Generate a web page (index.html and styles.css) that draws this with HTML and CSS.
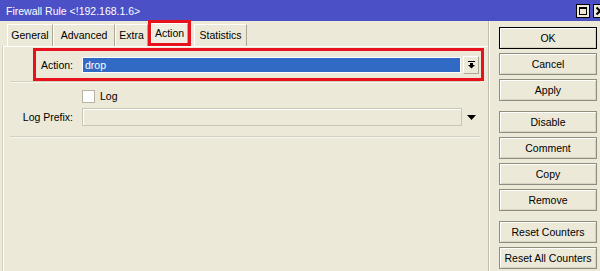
FILE: index.html
```html
<!DOCTYPE html>
<html>
<head>
<meta charset="utf-8">
<title>Firewall Rule</title>
<link rel="stylesheet" href="styles.css">
</head>
<body>
<div class="window">
  <div class="titlebar">
    <span class="title">Firewall Rule &lt;!192.168.1.6&gt;</span>
    <div class="controls">
      <span class="ctl">
        <svg width="14" height="14" viewBox="0 0 14 14"><rect x="0.5" y="0.5" width="13" height="13" fill="#ece9d8" stroke="#000"/><rect x="3.5" y="3.5" width="7" height="7" fill="none" stroke="#000"/><rect x="3" y="3" width="8" height="2" fill="#000"/></svg>
      </span>
      <span class="ctl">
        <svg width="14" height="14" viewBox="0 0 14 14"><rect x="0.5" y="0.5" width="13" height="13" fill="#ece9d8" stroke="#000"/><path d="M3.5 3.5 L10.5 10.5 M10.5 3.5 L3.5 10.5" stroke="#000" stroke-width="2"/></svg>
      </span>
    </div>
  </div>
  <div class="main">
    <div class="left">
      <div class="tabs">
        <div class="tab w-general">General</div>
        <div class="tab w-advanced">Advanced</div>
        <div class="tab w-extra">Extra</div>
        <div class="tab-mark"><div class="tab active">Action</div></div>
        <div class="tab w-stats">Statistics</div>
      </div>
      <div class="panel">
        <div class="action-mark">
          <span class="lbl">Action:</span>
          <div class="select">drop</div>
          <div class="dd-btn">
            <svg width="7" height="8" viewBox="0 0 7 8"><rect x="0" y="0" width="7" height="1" fill="#000"/><rect x="2" y="2" width="3" height="2" fill="#000"/><path d="M0 4 H7 L3.5 7.5 Z" fill="#000"/></svg>
          </div>
        </div>
        <div class="sep"></div>
        <div class="row log-row">
          <span class="check"></span>
          <span class="check-text">Log</span>
        </div>
        <div class="row prefix-row">
          <span class="lbl">Log Prefix:</span>
          <div class="input"></div>
          <svg class="arrow" width="9" height="5" viewBox="0 0 9 5"><path d="M0 0 H9 L4.5 5 Z" fill="#000"/></svg>
        </div>
        <div class="sep"></div>
      </div>
    </div>
    <div class="vsep"></div>
    <div class="buttons">
      <div class="group">
        <div class="btn default">OK</div>
        <div class="btn">Cancel</div>
        <div class="btn">Apply</div>
      </div>
      <div class="group">
        <div class="btn">Disable</div>
        <div class="btn">Comment</div>
        <div class="btn">Copy</div>
        <div class="btn">Remove</div>
      </div>
      <div class="group">
        <div class="btn">Reset Counters</div>
        <div class="btn">Reset All Counters</div>
      </div>
    </div>
  </div>
</div>
</body>
</html>
```

FILE: styles.css
```css
html, body {
  margin: 0;
  padding: 0;
}
body {
  background: #ece9d8;
  font-family: "Liberation Sans", Arial, sans-serif;
  font-size: 10.5px;
  color: #000;
  overflow: hidden;
}
.window {
  width: 600px;
  height: 271px;
  overflow: hidden;
  display: flex;
  flex-direction: column;
}
.titlebar {
  flex: none;
  height: 21px;
  background: #4b50c7;
  color: #fff;
  display: flex;
  align-items: center;
  justify-content: space-between;
  padding-left: 6px;
  overflow: hidden;
}
.title {
  line-height: 21px;
  padding-top: 1px;
}
.controls {
  display: flex;
  gap: 3px;
  margin-right: -7px;
}
.ctl {
  display: block;
  width: 14px;
  height: 14px;
}
.ctl svg {
  display: block;
}
.main {
  flex: 1;
  display: flex;
  min-height: 0;
}
.left {
  width: 488px;
  display: flex;
  flex-direction: column;
}
.tabs {
  flex: none;
  height: 25px;
  display: flex;
  align-items: flex-end;
  padding-left: 7px;
}
.tab {
  box-sizing: border-box;
  height: 22px;
  border-top: 1px solid #fff;
  border-left: 1px solid #fff;
  border-right: 1px solid #aca899;
  text-align: center;
  line-height: 21px;
  white-space: nowrap;
}
.w-general { width: 46px; }
.w-advanced { width: 62px; }
.w-extra { width: 33px; }
.w-stats { width: 53px; }
.tab-mark {
  box-sizing: border-box;
  width: 43px;
  height: 26px;
  border: 3px solid #e8121c;
  margin-right: 3px;
}
.tab.active {
  width: 37px;
  height: 20px;
  line-height: 18px;
  background: #f0eee2;
}
.panel {
  flex: 1;
  margin-left: 3px;
  border-top: 1px solid #fff;
  border-left: 1px solid #fff;
  box-shadow: -1px 0 0 #d2cfbf;
}
.action-mark {
  box-sizing: border-box;
  width: 451px;
  height: 33px;
  margin: 1px 0 0 29px;
  border: 3px solid #e8121c;
  display: flex;
  align-items: center;
}
.lbl {
  display: block;
  text-align: right;
  white-space: nowrap;
}
.action-mark .lbl {
  width: 37px;
  margin-right: 9px;
}
.select {
  box-sizing: border-box;
  width: 379px;
  height: 16px;
  background: #316ac5;
  color: #fff;
  border: 1px solid #fff;
  padding-left: 2px;
  line-height: 14px;
}
.dd-btn {
  box-sizing: border-box;
  width: 16px;
  height: 18px;
  margin-left: 2px;
  border-top: 1px solid #fff;
  border-left: 1px solid #fff;
  border-right: 1px solid #aca899;
  border-bottom: 1px solid #aca899;
  display: flex;
  align-items: center;
  justify-content: center;
}
.dd-btn svg {
  display: block;
}
.sep {
  width: 470px;
  height: 1px;
  margin-left: 6px;
  background: #d4d0c0;
  border-bottom: 1px solid #f7f6ef;
}
.row {
  display: flex;
  align-items: center;
}
.log-row {
  height: 16px;
  margin-top: 5px;
  padding-left: 78px;
}
.check {
  box-sizing: border-box;
  width: 13px;
  height: 13px;
  background: #fff;
  border: 1px solid #b7b4a6;
}
.check-text {
  margin-left: 5px;
}
.prefix-row {
  height: 20px;
  margin-top: 3px;
  margin-bottom: 9px;
}
.prefix-row .lbl {
  width: 69px;
  margin-right: 9px;
}
.input {
  box-sizing: border-box;
  width: 380px;
  height: 18px;
  border: 1px solid #c9c6b6;
  box-shadow: inset 1px 1px 0 #fff;
}
.arrow {
  display: block;
  margin-left: 5px;
}
.vsep {
  flex: none;
  width: 1px;
  background: #c3c0b1;
  border-right: 1px solid #fbfaf5;
}
.buttons {
  padding: 6px 0 0 9px;
  display: flex;
  flex-direction: column;
  gap: 10px;
}
.group {
  display: flex;
  flex-direction: column;
  gap: 4px;
}
.btn {
  box-sizing: border-box;
  width: 98px;
  height: 22px;
  border: 1px solid #8f8c80;
  box-shadow: inset 1px 1px 0 #fff, inset -1px -1px 0 #d8d4c4;
  text-align: center;
  line-height: 20px;
  white-space: nowrap;
}
.btn.default {
  border-color: #000;
}
```
